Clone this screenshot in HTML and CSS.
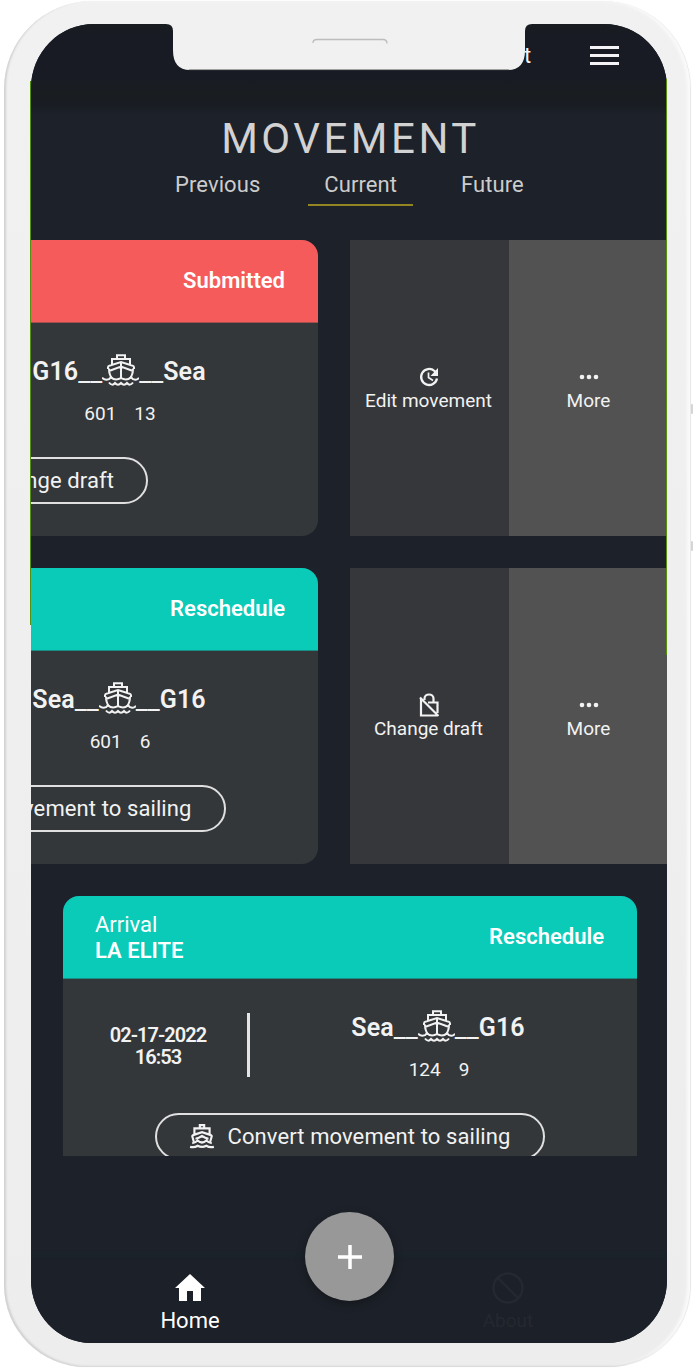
FILE: index.html
```
<!DOCTYPE html>
<html lang="en">
<head>
<meta charset="utf-8">
<title>Movement</title>
<link rel="stylesheet" href="styles.css">
</head>
<body>
<svg class="symbols" aria-hidden="true">
  <symbol id="ship" viewBox="0 0 37 32">
    <g fill="none" stroke="currentColor" stroke-width="2">
      <path d="M15 4V1.2h8V4M10 11V5h18v6M6 15v-1.800Q6 12 8 11.500L19 8l11 3.500q2 .5 2 1.700V15M19 8v17M7 17l12-4.500 12 4.500M7 14.500q0 6 3 10M31 14.500q0 6-3 10"/>
      <path d="M0 23.700q3 3.200 7 1.500l2-2q4 4 10 1 6 3 10-1l2 2q4 1.700 6-1.500"/>
      <path d="M7 28.500q3 4 6 .5 3 3.500 6 0 3 3.500 6 0 3 3.500 6-.5"/>
    </g>
  </symbol>
  <symbol id="boat" viewBox="0 0 24 24">
    <g fill="none" stroke="currentColor" stroke-width="2">
      <path d="M10 4V2h4v2M5 10V5h14v5M4.500 17.500 3 12.200q0-.7.700-1L12 8.500l8.300 2.700q.7.300.7 1l-1.500 5.300"/>
      <path d="M6 14.500q3-.5 6-2.500 3 2 6 2.500M3 18.500q2.500 0 5-2.300 4 3.600 8 0 2.500 2.300 5 2.300M1 22q4 1 7-1 4 2.200 8 0 3 2 7 1"/>
    </g>
  </symbol>
</svg>

<div class="phone">
  <div class="screen">
    <header class="topbar">
      <span class="topbar-label">t</span>
      <span class="burger"><i></i><i></i><i></i></span>
    </header>

    <h1 class="title">MOVEMENT</h1>
    <nav class="tabs">
      <span class="tab">Previous</span>
      <span class="tab tab-active">Current</span>
      <span class="tab tab-last">Future</span>
    </nav>

    <main class="list">
      <section class="row row-swiped">
        <article class="card">
          <div class="card-head head-red"><span></span><b class="status">Submitted</b></div>
          <div class="info">
            <div></div><div class="divider"></div>
            <div class="trip">
              <div class="route"><b>G16</b><span class="dash">__</span><svg class="ship"><use href="#ship"/></svg><span class="dash">__</span><b>Sea</b></div>
              <div class="numbers"><span>601</span><span>13</span></div>
            </div>
          </div>
          <div class="pill pill-draft">Change draft</div>
        </article>
        <div class="action">
          <svg class="action-icon" viewBox="0 0 20 20"><path fill="none" stroke="currentColor" stroke-width="2.300" d="M18 11.500A8 8 0 1 1 15.500 4l2 2"/><path fill="currentColor" d="M19 1v8h-7.500z"/><path fill="none" stroke="currentColor" stroke-width="1.700" d="M9.500 5.500v5l4.500 3"/></svg>
          <span>Edit movement</span>
        </div>
        <div class="action action-more">
          <svg class="action-icon" viewBox="0 0 20 20"><g fill="currentColor"><circle cx="3" cy="10" r="2.300"/><circle cx="10" cy="10" r="2.300"/><circle cx="17" cy="10" r="2.300"/></g></svg>
          <span>More</span>
        </div>
      </section>

      <section class="row row-swiped">
        <article class="card">
          <div class="card-head"><span></span><b class="status">Reschedule</b></div>
          <div class="info">
            <div></div><div class="divider"></div>
            <div class="trip">
              <div class="route"><b>Sea</b><span class="dash">__</span><svg class="ship"><use href="#ship"/></svg><span class="dash">__</span><b>G16</b></div>
              <div class="numbers"><span>601</span><span>6</span></div>
            </div>
          </div>
          <div class="pill"><svg class="boat"><use href="#boat"/></svg>Convert movement to sailing</div>
        </article>
        <div class="action">
          <svg class="action-icon lock" viewBox="0 0 20 24"><g fill="none" stroke="currentColor" stroke-width="2.200"><path d="M5.500 7V5.500a4.500 4 0 0 1 9 0V9M9 9.500h9.500V20M2 6v16.500h16M1 4.500l18.500 18.500"/></g></svg>
          <span>Change draft</span>
        </div>
        <div class="action action-more">
          <svg class="action-icon" viewBox="0 0 20 20"><g fill="currentColor"><circle cx="3" cy="10" r="2.300"/><circle cx="10" cy="10" r="2.300"/><circle cx="17" cy="10" r="2.300"/></g></svg>
          <span>More</span>
        </div>
      </section>

      <section class="row">
        <article class="card">
          <div class="card-head"><span class="vessel">Arrival<br><b>LA ELITE</b></span><b class="status">Reschedule</b></div>
          <div class="info">
            <div class="date">02-17-2022<br>16:53</div><div class="divider"></div>
            <div class="trip">
              <div class="route"><b>Sea</b><span class="dash">__</span><svg class="ship"><use href="#ship"/></svg><span class="dash">__</span><b>G16</b></div>
              <div class="numbers"><span>124</span><span>9</span></div>
            </div>
          </div>
          <div class="pill"><svg class="boat"><use href="#boat"/></svg>Convert movement to sailing</div>
        </article>
      </section>
    </main>

    <footer class="bottom">
      <div class="nav-item home">
        <svg class="nav-icon" viewBox="0 0 32 32"><path fill="currentColor" d="M16 2 1 16h4v13h8V19h6v10h8V16h4z"/></svg>
        <span>Home</span>
      </div>
      <div class="nav-item about">
        <svg class="nav-icon" viewBox="0 0 32 32"><g fill="none" stroke="currentColor" stroke-width="2.500"><circle cx="16" cy="16" r="14.500"/><path d="m6 6 20 20"/></g></svg>
        <span>About</span>
      </div>
      <div class="fab"><svg viewBox="0 0 26 26"><path stroke="#fff" stroke-width="3.500" d="M13 1v24M1 13h24"/></svg></div>
    </footer>
  </div>
  <svg class="notch" viewBox="0 0 352 47">
    <path fill="#f1f1f1" d="M-7 0Q0 0 0 7v19q0 20 17 20h318q17 0 17-20V7q0-7 7-7z"/>
    <path fill="none" stroke="#999" d="M16 45.600h320"/>
    <path fill="none" stroke="#bdbdbd" stroke-width="1.300" d="M140 19q0-3.500 4-3.500h66q4 0 4 4"/>
  </svg>
  <i class="edge edge-left"></i>
  <i class="edge edge-right"></i>
</div>
<i class="knob knob-up"></i>
<i class="knob knob-down"></i>
</body>
</html>
```
FILE: styles.css
```
* { box-sizing: border-box; }
body {
  margin: 0;
  height: 1368px;
  padding: 1px 0 0 4px;
  background: #fff;
  font-family: Roboto, "Liberation Sans", sans-serif;
  font-size: 22px;
  color: #f2f2f2;
  overflow: hidden;
  position: relative;
}
.symbols { position: absolute; width: 0; height: 0; }
.phone {
  position: relative;
  width: 686px;
  height: 1366px;
  padding: 23px 23px 24px 27px;
  border-radius: 88px 88px 82px 82px;
  background: linear-gradient(#f1f1f1, #ededed);
  box-shadow: inset 2px -1px 2px #d2d2d2, inset -3px 0 3px #fafafa, 1px 0 1px #e6e6e6;
}
.screen {
  height: 1319px;
  overflow: hidden;
  display: flex;
  flex-direction: column;
  background: #1d2129;
  border-radius: 63px 63px 60px 60px / 64px 64px 63px 63px;
}
.topbar {
  flex: none;
  height: 91px;
  padding: 16px 48px 0 0;
  display: flex;
  justify-content: flex-end;
  background: linear-gradient(#181d21 0, #181b23 12%, #181b23 60%, #191d20 75%, #191d24 92%, #1d2129);
}
.topbar-label { width: 8px; margin-right: 58px; line-height: 32px; }
.burger { width: 29px; padding-top: 6px; display: flex; flex-direction: column; gap: 5px; }
.burger i { height: 3px; background: #f4f4f6; }
.title {
  margin: 0;
  height: 47px;
  line-height: 47px;
  text-align: center;
  font-size: 42px;
  font-weight: 400;
  letter-spacing: 3.500px;
  text-indent: 3px;
  color: #d2d2d2;
}
.tabs { display: flex; gap: 32px; padding-left: 128px; height: 63px; color: #ccc; letter-spacing: .08px; }
.tab { height: 45px; padding: 0 16px; line-height: 45px; }
.tab-active { border-bottom: 2px solid #928522; height: 44px; }
.list { height: 932px; overflow: hidden; padding-top: 15.500px; display: flex; flex-direction: column; gap: 32px; flex: none; }
.row { display: flex; flex: none; height: 296px; padding-left: 32px; }
.row-swiped { padding-left: 0; margin-left: -287px; }
.card { width: 574px; flex: none; border-radius: 16px; overflow: hidden; background: #333739; }
.row-swiped .card { margin-right: 32px; }
.card-head {
  height: 83px;
  padding: 0 33px 0 32px;
  display: flex;
  align-items: center;
  justify-content: space-between;
  background: #0acab8;
  border-bottom: 1px solid #188d83;
  color: #fff;
}
.head-red { background: #f65b5b; border-color: #a44e50; }
.status, .vessel b, .route b, .date { font-weight: 600; }
.vessel { line-height: 26px; padding-top: 3px; }
.info { height: 134px; padding: 0 11px 0 6px; display: grid; grid-template-columns: 178px 3px 376px; align-items: center; text-align: center; }
.divider { height: 64px; margin-bottom: 1px; background: #e4e4e4; }
.date { font-size: 20px; line-height: 22px; letter-spacing: -.95px; }
.trip { height: 134px; padding-top: 31px; }
.route { display: flex; justify-content: center; align-items: center; height: 36px; font-size: 25px; }
.route b { letter-spacing: .1px; }
.dash { width: 24px; font-size: 26.500px; display: flex; justify-content: center; }
.ship { width: 37px; height: 32px; margin-bottom: 3px; }
.numbers { display: flex; justify-content: center; gap: 18px; font-size: 19px; line-height: 22px; margin-top: 13px; padding-left: 2px; }
.pill {
  width: 390px;
  height: 47px;
  margin: 0 auto;
  display: flex;
  align-items: center;
  justify-content: center;
  gap: 12px;
  letter-spacing: .1px;
  border: 2px solid #e0e0e0;
  border-radius: 24px;
}
.pill-draft { width: 234px; justify-content: flex-end; padding-right: 32px; }
.boat { width: 26px; height: 26px; }
.action {
  width: 159px;
  flex: none;
  display: flex;
  flex-direction: column;
  align-items: center;
  padding-top: 125px;
  padding-right: 2px;
  background: #36373a;
  font-size: 19px;
  line-height: 24px;
}
.action-more { background: #525253; padding-right: 0; }
.action-icon { width: 20px; height: 24px; }
.bottom { position: relative; flex: none; height: 187px; padding-top: 98px; display: flex; background: linear-gradient(#1d2129 50%, #1a2229 53%, #1c2028 56%); }
.nav-item { width: 318px; display: flex; flex-direction: column; align-items: center; gap: 2px; padding-top: 18px; line-height: 29px; }
.nav-icon { width: 32px; height: 32px; }
.home { color: #fff; }
.about { color: #242830; font-size: 19px; }
.fab {
  position: absolute;
  left: 274px;
  top: 56px;
  width: 89px;
  height: 89px;
  border-radius: 50%;
  display: grid;
  place-items: center;
  background: #989898;
  box-shadow: 0 3px 10px rgba(0, 0, 0, .3);
}
.fab svg { width: 26px; height: 26px; }
.notch { position: absolute; left: 169px; top: 23px; width: 352px; height: 47px; overflow: visible; }
.edge { position: absolute; width: 1px; background: #55910c; }
.edge-left { left: 26px; top: 80px; height: 544px; }
.edge-right { left: 662px; top: 78px; height: 576px; }
.knob { position: absolute; left: 691px; width: 2px; height: 10px; border-radius: 2px; background: #d5d5d5; }
.knob-up { top: 404px; }
.knob-down { top: 541px; }
```
